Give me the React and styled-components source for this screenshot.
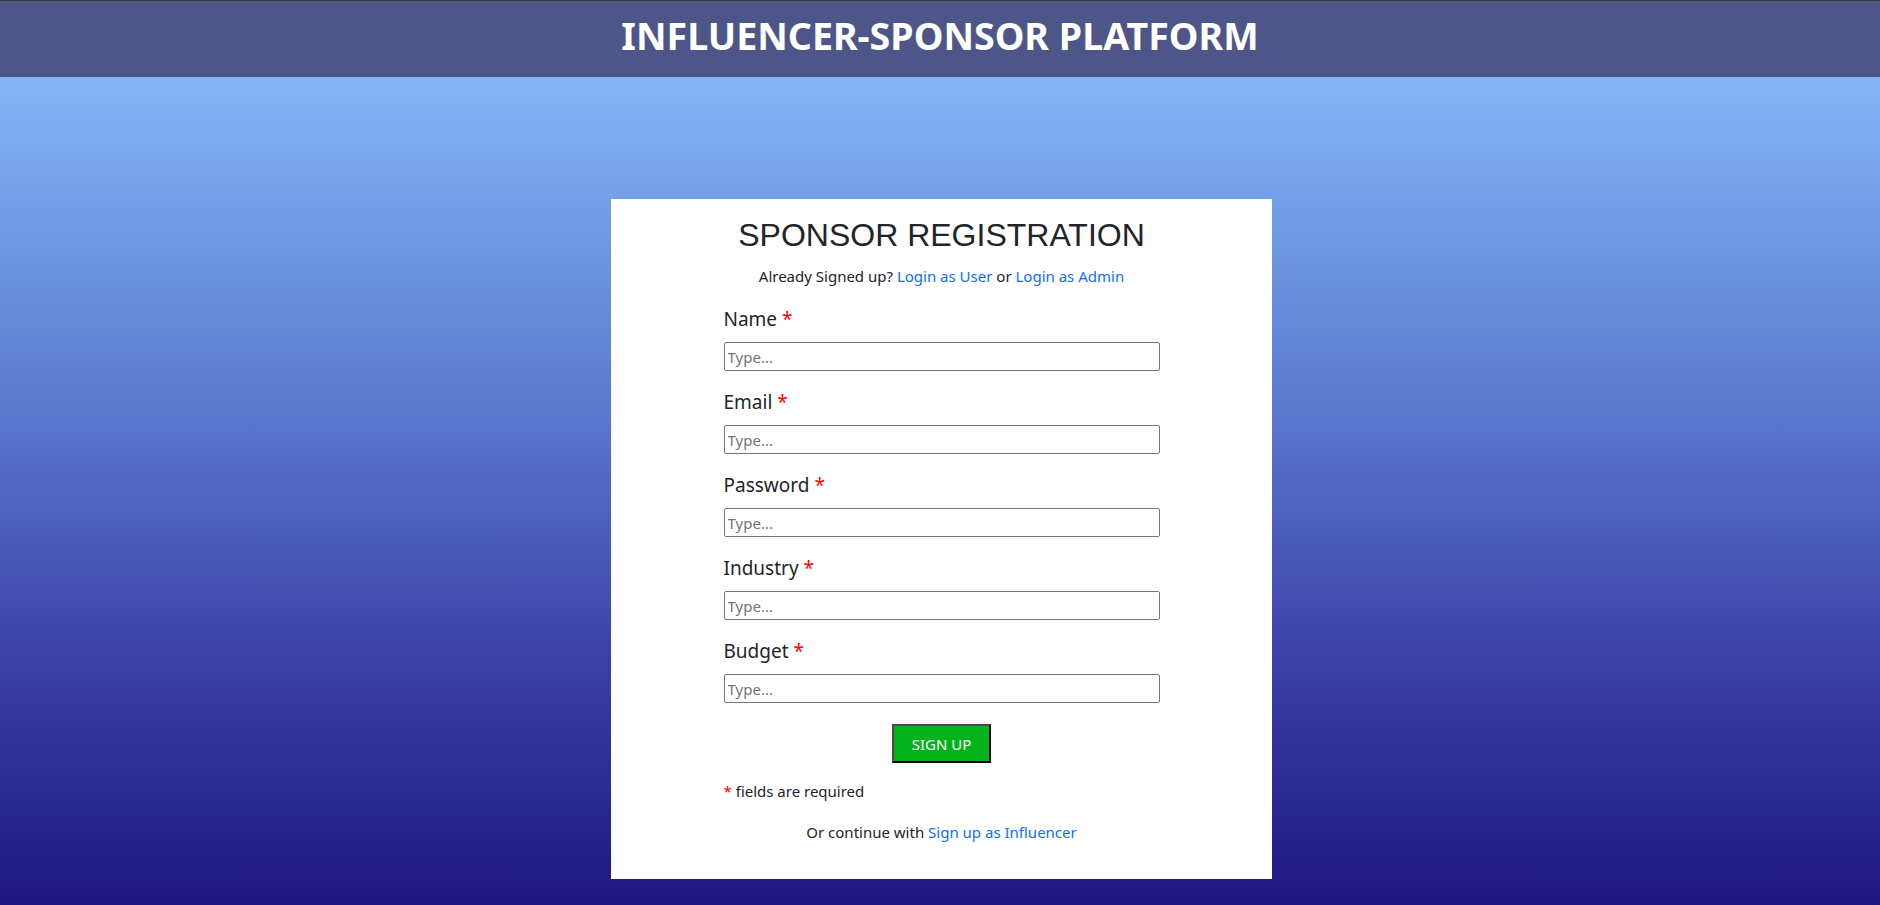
import React from "react";
import styled, { createGlobalStyle } from "styled-components";

const GlobalStyle = createGlobalStyle`
  html, body {
    margin: 0;
    padding: 0;
  }
  body {
    font-family: "Noto Sans", "Open Sans", sans-serif;
    color: #212529;
  }
`;

const Page = styled.div`
  min-height: 100vh;
  display: flex;
  flex-direction: column;
`;

const Header = styled.header`
  box-sizing: border-box;
  height: 77px;
  border-top: 1px solid #3c3c3c;
  padding-bottom: 6px;
  background-color: #4e5689;
  display: flex;
  align-items: center;
  justify-content: center;

  h1 {
    margin: 0;
    color: #fff;
    font-family: "Noto Sans", sans-serif;
    font-weight: 700;
    font-size: 37.6px;
    line-height: 44px;
  }
`;

const Main = styled.main`
  flex: 1;
  background: linear-gradient(180deg, #84b7f6 0%, #5b78cf 40%, #3a41a6 70%, #1f1581 100%);
  display: flex;
  justify-content: center;
  align-items: flex-start;
  padding: 122px 0 27px 3px;
`;

const Card = styled.div`
  width: 661px;
  background: #fff;
  padding: 17px 0 36px;
  display: flex;
  flex-direction: column;
  align-items: center;
`;

const Title = styled.h2`
  margin: 0;
  font-family: "Liberation Sans", Arial, sans-serif;
  font-weight: 400;
  font-size: 32px;
  line-height: 38px;
  color: #212529;
`;

const Note = styled.p`
  margin: ${(p) => p.$top || 0}px 0 0;
  font-size: 15px;
  line-height: 22px;
  color: #212529;
  text-align: ${(p) => p.$align || "center"};
  align-self: ${(p) => (p.$align === "left" ? "stretch" : "auto")};

  a {
    color: #0d6efd;
    text-decoration: none;
  }
`;

const Form = styled.form`
  width: 436px;
  margin-top: 20px;
  display: flex;
  flex-direction: column;
`;

const Field = styled.div`
  display: flex;
  flex-direction: column;
  margin-bottom: 19px;
`;

const Label = styled.label`
  font-size: 19px;
  line-height: 24px;
  margin-bottom: 11px;
  color: #212529;
`;

const Star = styled.span`
  color: #ff0000;
`;

const Input = styled.input`
  box-sizing: border-box;
  height: 29px;
  width: 100%;
  border: 1px solid #767676;
  border-radius: 2px;
  padding: 0 3px;
  font-family: "Noto Sans", sans-serif;
  font-size: 15px;
  color: #212529;
  background: #fff;

  &::placeholder {
    color: #757575;
  }
`;

const Button = styled.button`
  align-self: center;
  margin-top: 2px;
  height: 39px;
  padding: 0 18px;
  background: #04b21a;
  color: #fff;
  font-family: "Noto Sans", sans-serif;
  font-size: 15px;
  border-width: 2px;
  border-style: solid;
  border-color: #4a4a4a #000 #000 #4a4a4a;
  cursor: pointer;
`;

const fields = ["Name", "Email", "Password", "Industry", "Budget"];

export default function App() {
  return (
    <Page>
      <GlobalStyle />
      <Header>
        <h1>INFLUENCER-SPONSOR PLATFORM</h1>
      </Header>
      <Main>
        <Card>
          <Title>SPONSOR REGISTRATION</Title>
          <Note $top={11}>
            Already Signed up? <a href="#">Login as User</a> or{" "}
            <a href="#">Login as Admin</a>
          </Note>
          <Form onSubmit={(e) => e.preventDefault()}>
            {fields.map((f) => (
              <Field key={f}>
                <Label>
                  {f} <Star>*</Star>
                </Label>
                <Input type={f === "Password" ? "password" : "text"} placeholder="Type..." />
              </Field>
            ))}
            <Button type="submit">SIGN UP</Button>
            <Note $top={17} $align="left">
              <Star>*</Star> fields are required
            </Note>
            <Note $top={19}>
              Or continue with <a href="#">Sign up as Influencer</a>
            </Note>
          </Form>
        </Card>
      </Main>
    </Page>
  );
}
